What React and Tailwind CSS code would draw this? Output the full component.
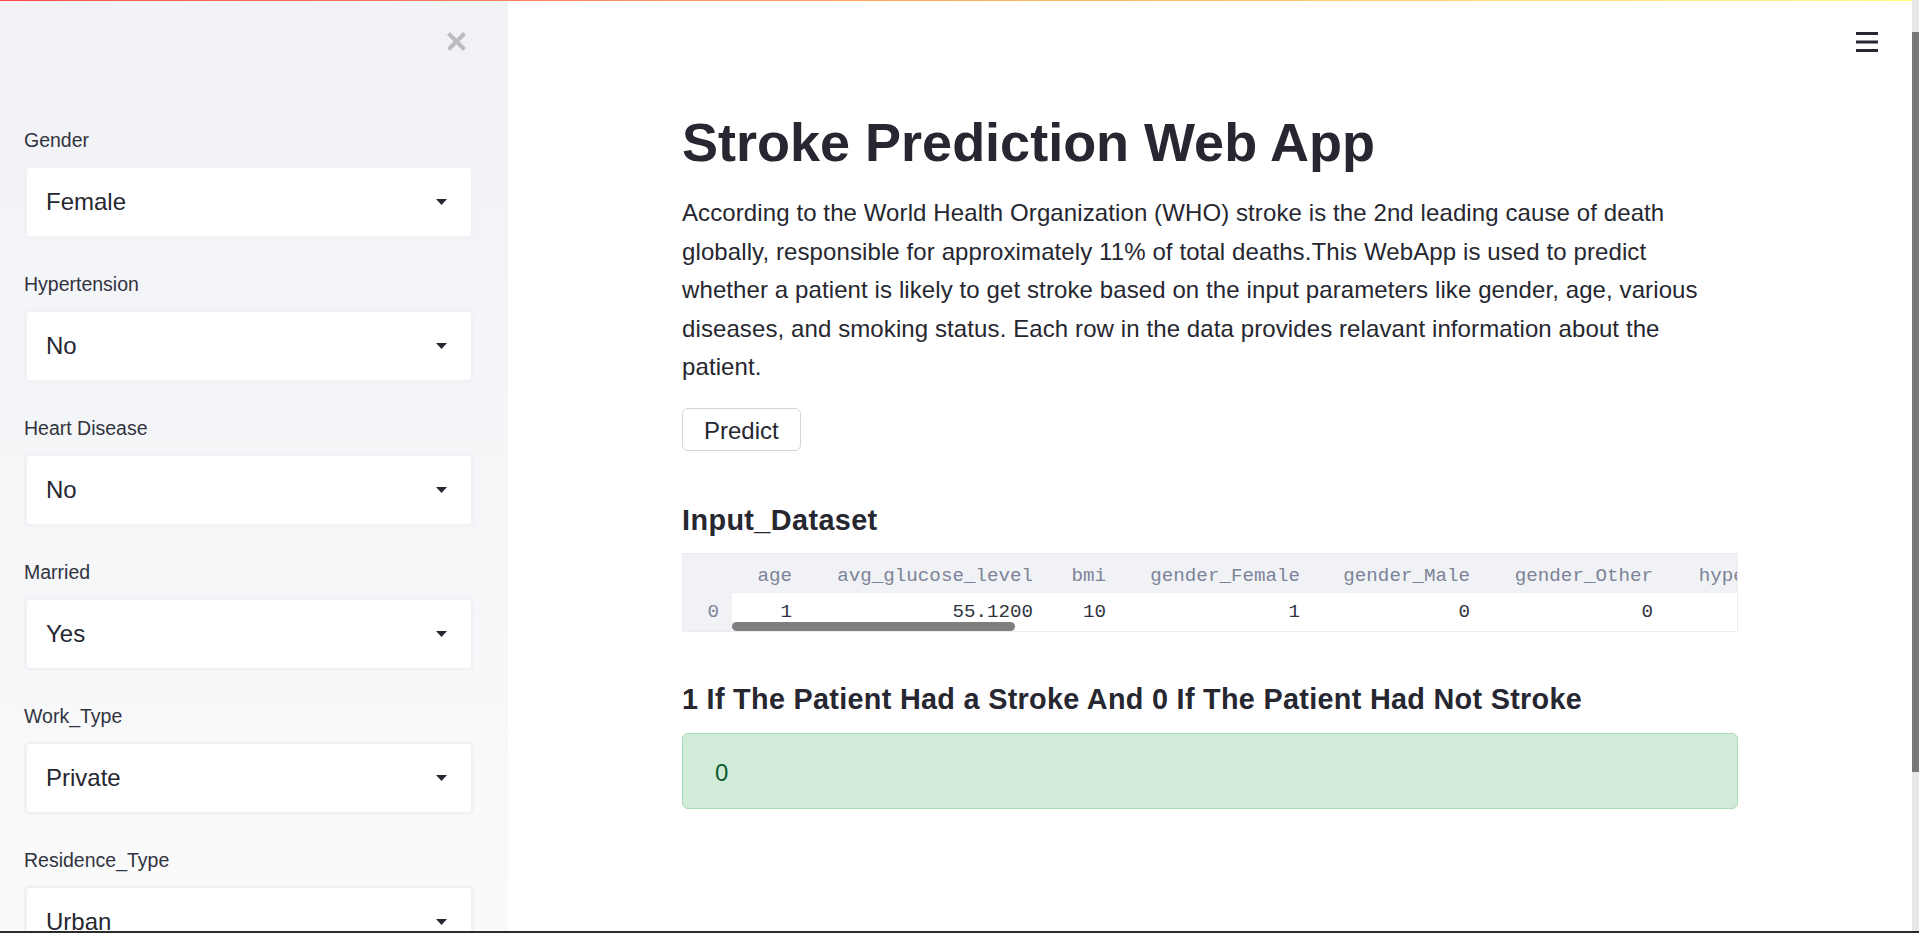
// Stroke prediction app: sidebar of select inputs, main column with title,
// description, predict button, a one-row dataframe and the result box.
const fields = [
  { label: "Gender", value: "Female" },
  { label: "Hypertension", value: "No" },
  { label: "Heart Disease", value: "No" },
  { label: "Married", value: "Yes" },
  { label: "Work_Type", value: "Private" },
  { label: "Residence_Type", value: "Urban" },
];

// last column runs past the frame's right edge, only its header shows
const columns = [
  { name: "age", value: "1", w: "w-[79px]" },
  { name: "avg_glucose_level", value: "55.1200", w: "w-[241px]" },
  { name: "bmi", value: "10", w: "w-[73px]" },
  { name: "gender_Female", value: "1", w: "w-[194px]" },
  { name: "gender_Male", value: "0", w: "w-[170px]" },
  { name: "gender_Other", value: "0", w: "w-[183px]" },
  { name: "hypertension", value: "", w: "w-[184px]" },
];

function Caret() {
  return (
    <svg width="11" height="6" viewBox="0 0 11 6" className="shrink-0">
      <path d="M0 0h11L5.5 6z" fill="#262730" />
    </svg>
  );
}

function SelectField({ label, value }) {
  return (
    <div className="flex flex-col">
      <label className="block text-[19.5px] leading-[24px] text-[#31333f]">{label}</label>
      <div
        className="mt-[13px] flex h-[74px] shrink-0 items-center justify-between rounded-[6px]
                   border-[3px] border-[#f0f2f6] bg-white pl-[19px] pr-[24px]"
      >
        <span className="text-[24px] text-[#262730]">{value}</span>
        <Caret />
      </div>
    </div>
  );
}

function Sidebar() {
  return (
    <aside className="flex w-[508px] shrink-0 flex-col overflow-hidden bg-linear-to-b from-[#f0f2f6] to-[#fafafa] pl-[24px] pr-[34px]">
      <div className="flex justify-end pt-[31px] pr-[7px]">
        <button className="flex h-[21px] w-[21px] items-center justify-center">
          <svg width="21" height="21" viewBox="0 0 21 21">
            <path d="M2.5 2.5L18.5 18.5M18.5 2.5L2.5 18.5" stroke="#bcbdc1" strokeWidth="4.2" />
          </svg>
        </button>
      </div>
      <div className="mt-[76px] flex flex-col gap-[33px]">
        {fields.map((f) => (
          <SelectField key={f.label} label={f.label} value={f.value} />
        ))}
      </div>
    </aside>
  );
}

function DataTable() {
  return (
    <div className="relative mt-[15.7px] overflow-hidden border border-[#eaecf1] font-['Liberation_Mono',monospace] text-[19.2px]">
      {/* header */}
      <div className="flex h-[39px] bg-[#f0f2f6] pt-[5px] leading-[34px] text-[#7d8397]">
        <div className="w-[49px] shrink-0" />
        {columns.map((c) => (
          <div key={c.name} className={`${c.w} shrink-0 whitespace-nowrap pr-[19px] text-right`}>
            {c.name}
          </div>
        ))}
      </div>
      {/* row 0 */}
      <div className="flex h-[38px] leading-[38px] text-[#31333f]">
        <div className="w-[49px] shrink-0 bg-[#f0f2f6] pr-[13px] text-right text-[#7d8397]">0</div>
        {columns.map((c) => (
          <div key={c.name} className={`${c.w} shrink-0 whitespace-nowrap pr-[19px] text-right`}>
            {c.value}
          </div>
        ))}
      </div>
      {/* overlay scrollbar thumb */}
      <div className="absolute bottom-0 left-[49px] h-[9px] w-[283px] rounded-full bg-[#7f7f7f]" />
    </div>
  );
}

function Main() {
  return (
    <main className="relative min-w-0 flex-1 overflow-hidden bg-white">
      <button className="absolute right-[34px] top-[32px]">
        <svg width="22" height="20" viewBox="0 0 22 20">
          <rect x="0" y="0" width="22" height="3" fill="#262730" />
          <rect x="0" y="8.5" width="22" height="3" fill="#262730" />
          <rect x="0" y="17" width="22" height="3" fill="#262730" />
        </svg>
      </button>

      <div className="mx-auto flex w-[1056px] flex-col pt-[110px]">
        <h1 className="text-[54px] font-bold leading-[64.8px] text-[#262730]">Stroke Prediction Web App</h1>
        <p className="mt-[19.7px] text-[24px] leading-[38.4px] tracking-[0.1px] text-[#262730]">
          According to the World Health Organization (WHO) stroke is the 2nd leading cause of death
          <br />
          globally, responsible for approximately 11% of total deaths.This WebApp is used to predict
          <br />
          whether a patient is likely to get stroke based on the input parameters like gender, age, various
          <br />
          diseases, and smoking status. Each row in the data provides relavant information about the
          <br />
          patient.
        </p>

        <button
          className="mt-[21.5px] flex h-[43px] items-center self-start rounded-[6px] border border-[#d5d5d9]
                     bg-white px-[21px] pt-[2px] text-[24px] text-[#262730]"
        >
          Predict
        </button>

        <h3 className="mt-[51.75px] text-[28.8px] font-bold leading-[34.56px] tracking-[0.4px] text-[#262730]">
          Input_Dataset
        </h3>
        <DataTable />

        <h3 className="mt-[49.75px] text-[28.8px] font-bold leading-[34.56px] tracking-[0.3px] text-[#262730]">
          1 If The Patient Had a Stroke And 0 If The Patient Had Not Stroke
        </h3>
        <div className="mt-[16.7px] h-[76px] rounded-[6px] border border-[#a9dcb8] bg-[#d0ecd8] pl-[32px] pt-[20px] text-[24px] leading-[38.4px] text-[#0f5a2b]">
          0
        </div>
      </div>
    </main>
  );
}

export default function App() {
  return (
    <div className="flex h-[933px] w-[1919px] flex-col overflow-hidden bg-white font-['Liberation_Sans',Arial,sans-serif] text-[#262730]">
      <div className="flex min-h-0 flex-1">
        <div className="relative flex min-w-0 flex-1">
          {/* top decoration line */}
          <div className="absolute inset-x-0 top-0 z-10 h-[1px] bg-linear-to-r from-[#ff4b4b] to-[#fffd80]" />
          <Sidebar />
          <Main />
        </div>
        {/* page scrollbar */}
        <div className="flex w-[7px] shrink-0 flex-col bg-[#e8e8e8]">
          <div className="mt-[32px] h-[740px] bg-[#787878]" />
        </div>
      </div>
      <div className="h-[2px] shrink-0 bg-[#2b2b2b]" />
    </div>
  );
}
